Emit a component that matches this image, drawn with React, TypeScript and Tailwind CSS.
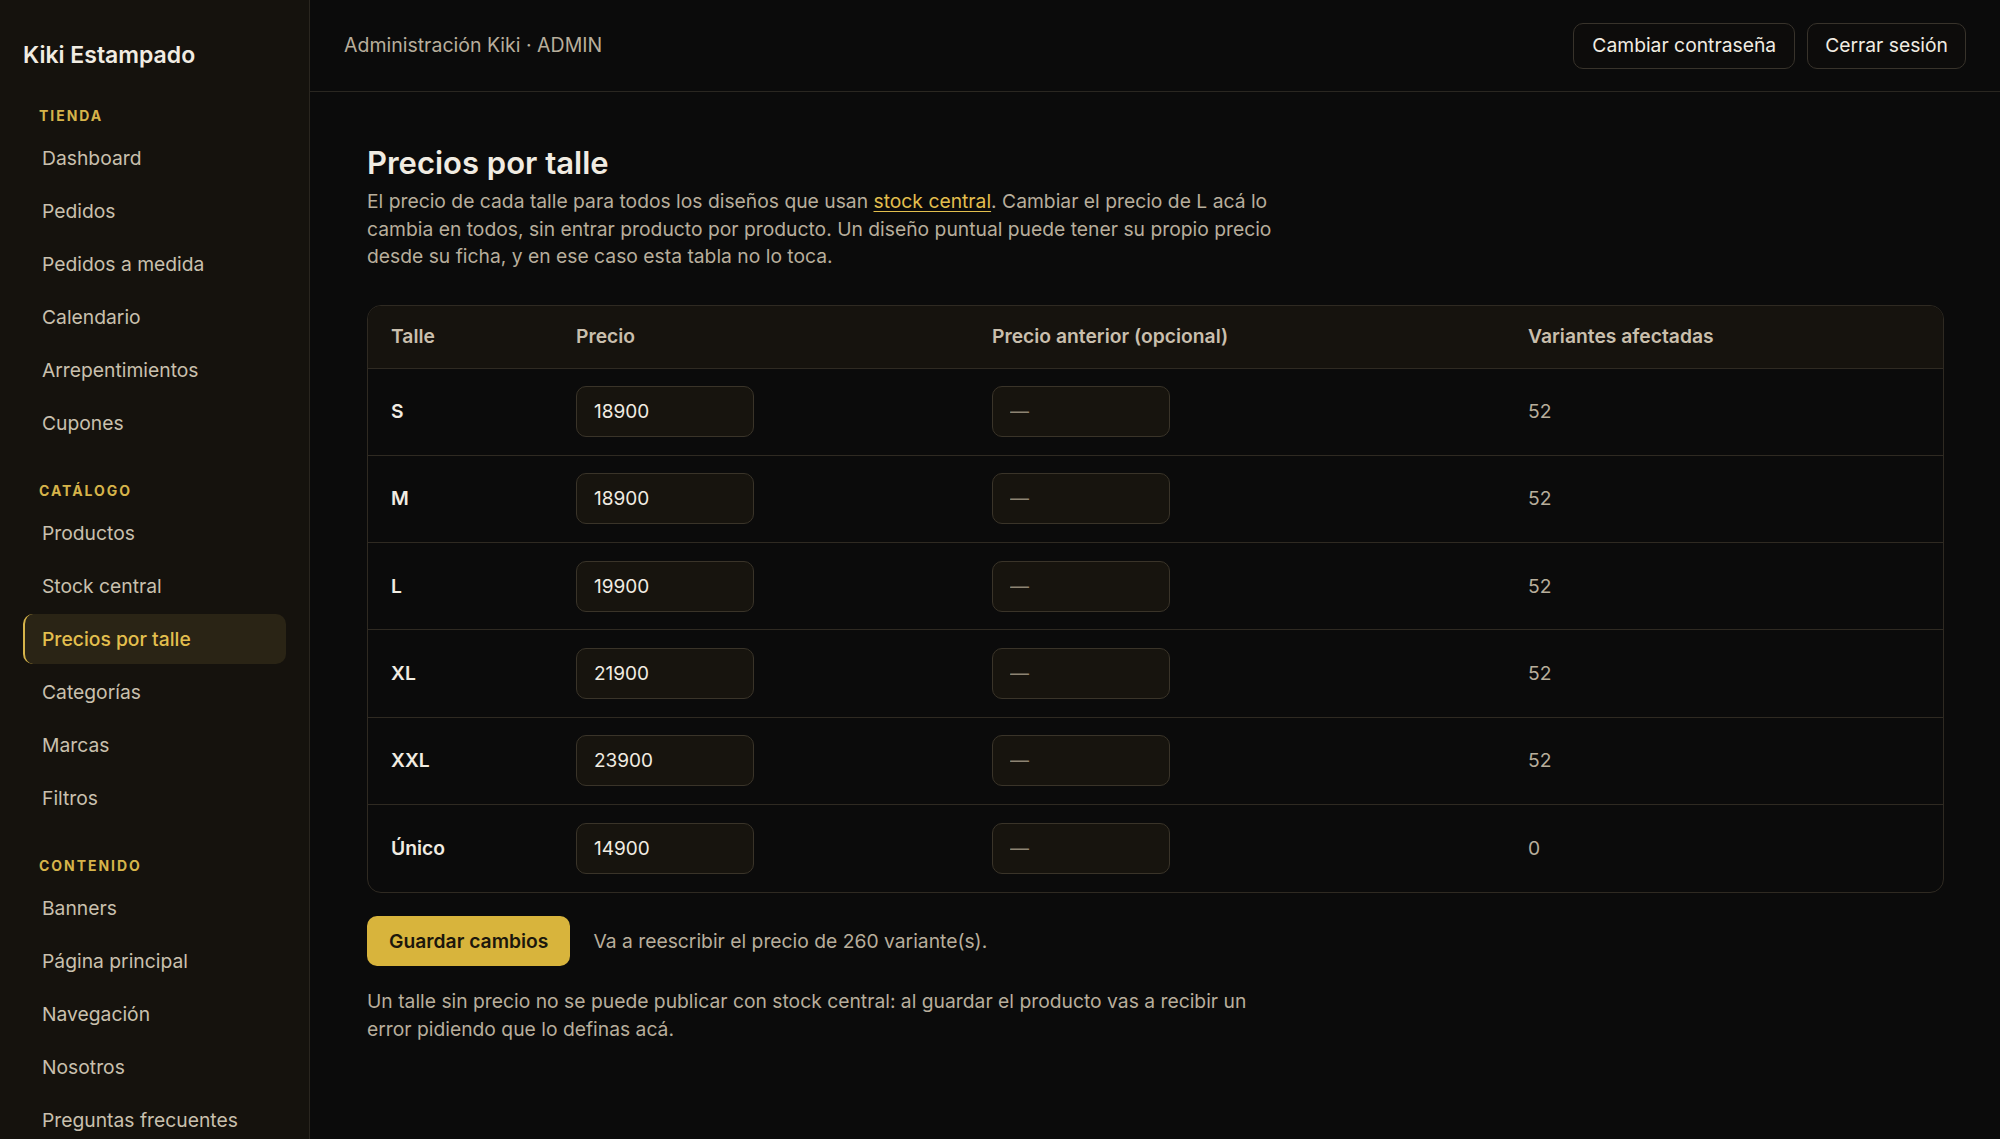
import { useState } from 'react'

type NavSection = {
  title: string
  items: string[]
}

const sections: NavSection[] = [
  {
    title: 'Tienda',
    items: ['Dashboard', 'Pedidos', 'Pedidos a medida', 'Calendario', 'Arrepentimientos', 'Cupones']
  },
  {
    title: 'Catálogo',
    items: ['Productos', 'Stock central', 'Precios por talle', 'Categorías', 'Marcas', 'Filtros']
  },
  {
    title: 'Contenido',
    items: ['Banners', 'Página principal', 'Navegación', 'Nosotros', 'Preguntas frecuentes']
  }
]

const initialRows = [
  { size: 'S', price: '18900', variants: 52 },
  { size: 'M', price: '18900', variants: 52 },
  { size: 'L', price: '19900', variants: 52 },
  { size: 'XL', price: '21900', variants: 52 },
  { size: 'XXL', price: '23900', variants: 52 },
  { size: 'Único', price: '14900', variants: 0 }
]

function Sidebar({ active }: { active: string }) {
  return (
    <aside className="w-[310px] shrink-0 h-full bg-[#15120d] border-r border-[#2a261f] overflow-hidden">
      <div className="pl-[23px] pt-[40px] text-[23px] leading-[30px] font-semibold text-[#f1ece2]">
        Kiki Estampado
      </div>

      <nav className="px-[23px] mt-[37px] space-y-[34px]">
        {sections.map(section => (
          <div key={section.title}>
            <div className="pl-[16px] mb-[9px] text-[14px] leading-[17px] font-bold uppercase tracking-[0.14em] text-[#d6b44a]">
              {section.title}
            </div>
            <ul className="flex flex-col gap-[3px]">
              {section.items.map(item => {
                const isActive = item === active
                return (
                  <li
                    key={item}
                    className={
                      isActive
                        ? 'h-[50px] flex items-center pl-[17px] rounded-[10px] border-l-2 border-[#d6b44a] bg-[#2a2415] text-[19.3px] font-medium text-[#e3bf4e]'
                        : 'h-[50px] flex items-center pl-[19px] rounded-[10px] text-[19.3px] text-[#c9c0ae]'
                    }
                  >
                    {item}
                  </li>
                )
              })}
            </ul>
          </div>
        ))}
      </nav>
    </aside>
  )
}

function Header() {
  return (
    <header className="h-[92px] shrink-0 flex items-center justify-between pl-[34px] pr-[34px] border-b border-[#2a2721]">
      <span className="text-[19.5px] text-[#b8ae9c]">Administración Kiki · ADMIN</span>
      <div className="flex items-center gap-[12px]">
        <button className="h-[46px] px-[18px] rounded-[10px] border border-[#38332b] bg-[#0d0c0b] text-[19.3px] text-[#f1ece2]">
          Cambiar contraseña
        </button>
        <button className="h-[46px] px-[17px] rounded-[10px] border border-[#38332b] bg-[#0d0c0b] text-[19.3px] text-[#f1ece2]">
          Cerrar sesión
        </button>
      </div>
    </header>
  )
}

function PriceInput({ value, placeholder, onChange }: { value: string; placeholder?: string; onChange: (v: string) => void }) {
  return (
    <input
      value={value}
      placeholder={placeholder}
      onChange={e => onChange(e.target.value)}
      className="w-[178px] h-[51px] px-[17px] rounded-[10px] border border-[#3a3429] bg-[#17140e] text-[19px] text-[#f1ece2] placeholder:text-[#8d8473] outline-none"
    />
  )
}

export default function App() {
  const [rows, setRows] = useState(initialRows.map(r => ({ ...r, previous: '' })))
  const total = rows.reduce((acc, r) => acc + r.variants, 0)

  const update = (i: number, key: 'price' | 'previous', v: string) => {
    setRows(prev => prev.map((r, idx) => (idx === i ? { ...r, [key]: v } : r)))
  }

  return (
    <div className="flex h-screen w-full bg-[#0b0b0b] font-['Inter','Noto_Sans',sans-serif] overflow-hidden">
      <Sidebar active="Precios por talle" />

      <main className="flex-1 flex flex-col min-w-0">
        <Header />

        <div className="pt-[51px] pl-[57px] pr-[56px]">
          <h1 className="text-[31px] leading-[40px] font-semibold text-[#f1ece2]">Precios por talle</h1>
          <p className="mt-[5px] max-w-[925px] text-[19.3px] leading-[27.5px] text-[#b8ae9c]">
            El precio de cada talle para todos los diseños que usan{' '}
            <a className="text-[#e3bf4e] underline underline-offset-[3px]">stock central</a>. Cambiar el precio de L acá lo
            cambia en todos, sin entrar producto por producto. Un diseño puntual puede tener su propio precio desde su
            ficha, y en ese caso esta tabla no lo toca.
          </p>

          {/* Table */}
          <div className="mt-[34px] rounded-[14px] border border-[#2f2a22] overflow-hidden">
            <div className="grid grid-cols-[185px_416px_536px_1fr] h-[63px] items-center px-[23px] bg-[#16130e] border-b border-[#2f2a22] text-[19.3px] font-semibold text-[#c9bfad]">
              <div>Talle</div>
              <div>Precio</div>
              <div>Precio anterior (opcional)</div>
              <div>Variantes afectadas</div>
            </div>
            {rows.map((row, i) => (
              <div
                key={row.size}
                className={
                  'grid grid-cols-[185px_416px_536px_1fr] h-[87.3px] items-center px-[23px] ' +
                  (i < rows.length - 1 ? 'border-b border-[#2f2a22]' : '')
                }
              >
                <div className="text-[19.3px] font-semibold text-[#f1ece2]">{row.size}</div>
                <div>
                  <PriceInput value={row.price} onChange={v => update(i, 'price', v)} />
                </div>
                <div>
                  <PriceInput value={row.previous} placeholder="—" onChange={v => update(i, 'previous', v)} />
                </div>
                <div className="text-[19.3px] text-[#b8ae9c]">{row.variants}</div>
              </div>
            ))}
          </div>

          <div className="mt-[23px] flex items-center gap-[23px]">
            <button className="h-[50px] px-[22px] rounded-[10px] bg-[#d8b43c] text-[19.3px] font-semibold text-[#1c170c]">
              Guardar cambios
            </button>
            <span className="text-[19.3px] text-[#b8ae9c]">Va a reescribir el precio de {total} variante(s).</span>
          </div>

          <p className="mt-[22px] max-w-[925px] text-[19.3px] leading-[27.5px] text-[#b8ae9c]">
            Un talle sin precio no se puede publicar con stock central: al guardar el producto vas a recibir un error
            pidiendo que lo definas acá.
          </p>
        </div>
      </main>
    </div>
  )
}
